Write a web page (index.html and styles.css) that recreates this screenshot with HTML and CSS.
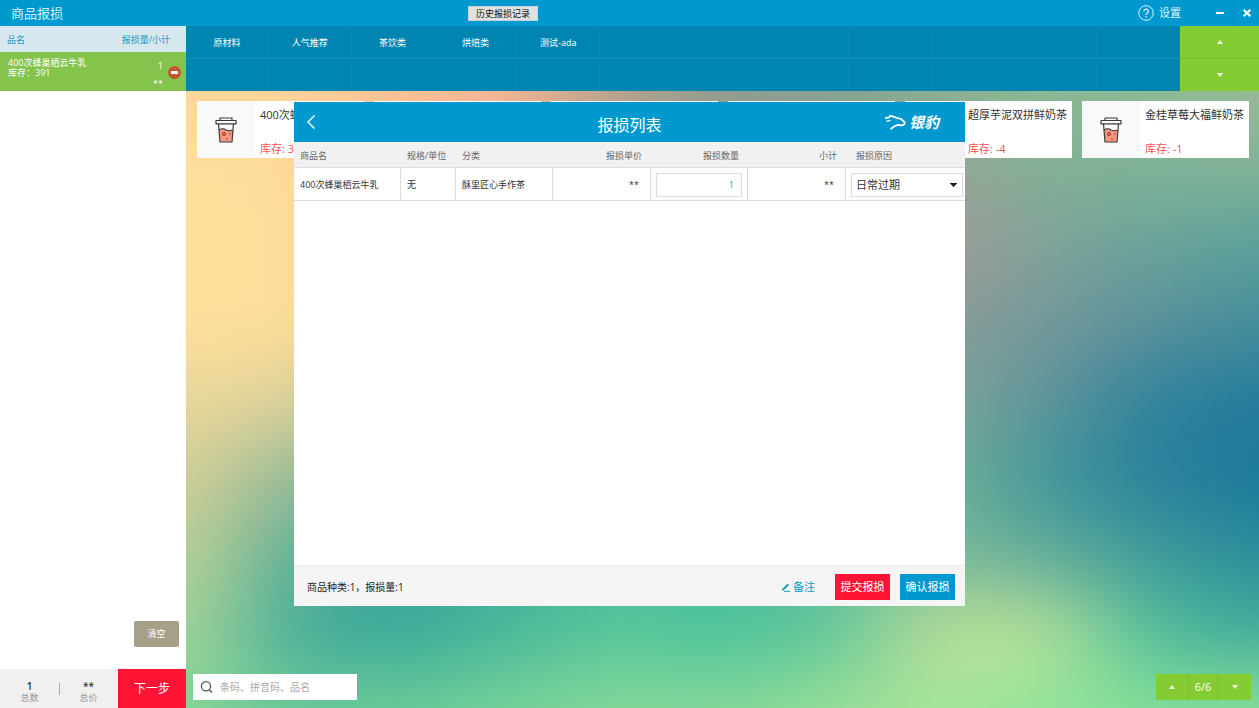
FILE: index.html
```html
<!DOCTYPE html>
<html lang="zh-CN">
<head>
<meta charset="utf-8">
<title>商品报损</title>
<link rel="stylesheet" href="styles.css">
</head>
<body>
<svg class="defs" aria-hidden="true">
  <symbol id="cup" viewBox="0 0 24 28">
    <path d="M5 14 Q9 11.500 12 14 Q15 15.500 19 14 L17.500 26 H6.500 Z" fill="#f9967c"/>
    <path d="M6 2 H18 V4.500 H6 Z M2 4.500 H22 V7.800 H2 Z M4.500 8 L6 26 H18 L19.500 8 M5 14 Q9 11.500 12 14 Q15 15.500 19 14" fill="none" stroke="#3b3b40" stroke-width="1.200" stroke-linejoin="round"/>
    <circle cx="10" cy="18" r="1.500" fill="none" stroke="#8c2f2a"/>
    <circle cx="16" cy="18" r="0.700" fill="#3b3b40"/><circle cx="13" cy="23" r="0.700" fill="#3b3b40"/>
  </symbol>
</svg>
<div class="app">
  <header class="topbar">
    <h1 class="topbar-title">商品报损</h1>
    <button class="history" type="button">历史报损记录</button>
    <div class="window-tools">
      <button class="settings" type="button">
        <svg width="16" height="16" viewBox="0 0 16 16" fill="none" stroke="currentColor"><circle cx="8" cy="8" r="7.300"/><path d="M5.800 6.300a2.200 2.200 0 1 1 3.400 1.900c-.8.500-1.200.8-1.200 1.700M8 11v1.500" stroke-width="1.300"/></svg>
        设置
      </button>
      <button class="win-btn" type="button" aria-label="最小化"><svg width="8" height="8" viewBox="0 0 8 8"><path d="M0 4H8" stroke="#fff" stroke-width="2"/></svg></button>
      <button class="win-btn close" type="button" aria-label="关闭"><svg width="8" height="8" viewBox="0 0 8 8"><path d="M.7.700 7.300 7.300M7.300.7.700 7.300" stroke="#fff" stroke-width="2"/></svg></button>
    </div>
  </header>

  <aside class="cart">
    <div class="cart-head"><span>品名</span><span>报损量/小计</span></div>
    <div class="cart-item">
      <div class="cart-name"><div>400次蜂巢栖云牛乳</div><div>库存：391</div></div>
      <div class="cart-qty"><span>1</span><span>**</span></div>
      <button class="remove" type="button" aria-label="移除"></button>
    </div>
    <div class="cart-space"><button class="clear" type="button">清空</button></div>
    <div class="cart-foot">
      <div class="total"><b>1</b><span>总数</span></div>
      <div class="total second"><b>**</b><span>总价</span></div>
      <button class="next" type="button">下一步</button>
    </div>
  </aside>

  <main class="main">
    <div class="wallpaper" aria-hidden="true">
      <div class="w1"></div><div class="w2"></div><div class="w3"></div><div class="w4"></div><div class="w5"></div><div class="w6"></div><div class="w7"></div><div class="w8"></div><div class="w9"></div>
    </div>
    <nav class="cats">
      <div class="cat-grid">
        <button type="button">原材料</button><button type="button">人气推荐</button><button type="button">茶饮类</button><button type="button">烘焙类</button><button type="button">测试-ada</button><i></i><i></i><i></i><i></i><i></i><i></i><i></i>
        <i></i><i></i><i></i><i></i><i></i><i></i><i></i><i></i><i></i><i></i><i></i><i></i>
      </div>
      <div class="cat-pager">
        <button type="button" aria-label="上一页"><span class="tri up"></span></button>
        <button type="button" aria-label="下一页"><span class="tri down"></span></button>
      </div>
    </nav>
    <section class="products">
      <article class="card"><div class="thumb"><svg><use href="#cup"/></svg></div><div class="info"><span>400次蜂巢栖云牛乳</span><em>库存: 391</em></div></article>
      <article class="card"></article>
      <article class="card"></article>
      <article class="card"></article>
      <article class="card"><div class="thumb"></div><div class="info"><span>超厚芋泥双拼鲜奶茶</span><em>库存: -4</em></div></article>
      <article class="card"><div class="thumb"><svg><use href="#cup"/></svg></div><div class="info"><span>金桂草莓大福鲜奶茶</span><em>库存: -1</em></div></article>
    </section>
    <footer class="bottom">
      <label class="search">
        <svg width="14" height="14" viewBox="0 0 14 14" fill="none" stroke="#555" stroke-width="1.300"><circle cx="6" cy="6.300" r="4.600"/><path d="M9.400 9.700 12 12.500"/></svg>
        <input type="text" placeholder="条码、拼音码、品名" aria-label="搜索商品">
      </label>
      <div class="pager">
        <button type="button" aria-label="上一页"><span class="tri up"></span></button>
        <span class="page">6/6</span>
        <button type="button" aria-label="下一页"><span class="tri down"></span></button>
      </div>
    </footer>
  </main>

  <section class="dialog" role="dialog" aria-labelledby="dlg-title">
    <header class="dlg-head">
      <button class="back" type="button" aria-label="返回"><svg width="10" height="16" viewBox="0 0 10 16"><path d="M8.500 1.500 2 8l6.500 6.500" fill="none" stroke="#fff" stroke-width="1.400"/></svg></button>
      <h2 id="dlg-title">报损列表</h2>
      <div class="brand">
        <svg width="22" height="16" viewBox="0 0 22 16" fill="none" stroke="#fff" stroke-width="1.800" stroke-linejoin="round"><path d="M0 4.200 4 3.400 5 1.800 8 2.500 11 3.600 16 5 19.500 8 19.800 9.800 17.500 11.300 12.500 11 9 12.500 5.500 15.200"/><path d="M1.500 7.400 5.500 6.300" stroke-width="1.200"/></svg>
        <span>银豹</span>
      </div>
    </header>
    <div class="dlg-body">
      <table>
        <colgroup><col class="c1"><col class="c2"><col class="c3"><col class="c4"><col class="c5"><col class="c6"><col class="c7"></colgroup>
        <thead><tr><th>商品名</th><th>规格/单位</th><th>分类</th><th class="num">报损单价</th><th class="num">报损数量</th><th class="num">小计</th><th class="reason">报损原因</th></tr></thead>
        <tbody><tr><td>400次蜂巢栖云牛乳</td><td>无</td><td>酥里匠心手作茶</td><td class="num">**</td><td class="field"><input type="text" value="1" aria-label="报损数量"></td><td class="num">**</td><td class="field pick"><select aria-label="报损原因"><option>日常过期</option></select></td></tr></tbody>
      </table>
    </div>
    <footer class="dlg-foot">
      <p>商品种类:1，报损量:1</p>
      <button class="note" type="button"><svg width="10" height="10" viewBox="0 0 10 10"><path d="M1 7.500 6.500 1.500 8 3 3 8 1 8.500Z" fill="currentColor"/><path d="M3 9.300H9" stroke="currentColor"/></svg>备注</button>
      <button class="act red" type="button">提交报损</button>
      <button class="act blue" type="button">确认报损</button>
    </footer>
  </section>
</div>
</body>
</html>
```
FILE: styles.css
```css
* { box-sizing: border-box; }
body { margin: 0; font: 12px/16px "Open Sans", "Noto Sans CJK SC", sans-serif; color: #333; }
button { border: 0; padding: 0; margin: 0; background: none; color: inherit; font: inherit; white-space: nowrap; }
h1, h2, p { margin: 0; font-weight: 400; }
.defs { position: absolute; width: 0; height: 0; }

.app { position: relative; display: grid; grid-template: 26px minmax(0, 1fr) / 186px minmax(0, 1fr); height: 100vh; overflow: hidden; }

.topbar { grid-column: 1 / -1; display: grid; grid-template-columns: 468px auto 1fr; align-items: center; background: #0099cf; color: #fff; }
.topbar-title { padding-left: 11px; font-size: 13px; color: #cfeefa; }
.history { width: 70px; height: 15px; background: #e1e1e1; border: 1px solid #c9d3d8; color: #111; font-size: 9px; line-height: 13px; }
.window-tools { display: flex; justify-content: flex-end; align-items: center; height: 26px; }
.settings { display: flex; align-items: center; gap: 5px; margin-right: 26px; font-size: 11px; color: #dff4fc; }
.win-btn { display: flex; align-items: center; justify-content: center; width: 26px; height: 26px; }
.win-btn.close { border-left: 1px solid #0089bb; }

.cart { display: flex; flex-direction: column; background: #fff; font-size: 9px; }
.cart-head { display: flex; justify-content: space-between; align-items: center; height: 26px; padding: 1px 16px 0 7px; background: #d6e8ed; color: #199bc2; }
.cart-item { display: flex; height: 39px; padding: 6px 5px 0 8px; background: #84c44c; color: #fff; line-height: 10px; }
.cart-name { flex: 1; }
.cart-qty { display: flex; flex-direction: column; align-items: flex-end; gap: 8px; margin-right: 5px; padding-top: 3px; }
.remove { width: 13px; height: 13px; margin-top: 8px; border-radius: 50%; background: linear-gradient(#fff, #fff) center / 7px 3px no-repeat #c4562c; }
.cart-space { flex: 1; display: flex; justify-content: flex-end; align-items: flex-end; padding: 0 7px 22px; }
.clear { width: 45px; height: 26px; border-radius: 2px; background: #a5a087; color: #fff; }
.cart-foot { display: flex; height: 39px; background: #f1f0ef; }
.total { position: relative; flex: 1; display: flex; flex-direction: column; align-items: center; padding-top: 11px; color: #999; line-height: 12px; }
.total b { color: #333; font-size: 10px; font-weight: 600; }
.total.second::before { content: ""; position: absolute; left: 0; top: 14px; height: 12px; border-left: 1px solid #aaa; }
.next { width: 68px; background: #ff1435; color: #fff; font-size: 12px; }

.main { position: relative; isolation: isolate; display: flex; flex-direction: column; min-width: 0; overflow: hidden; }

/* Soft colour field: nine blurred bands, larger than the area so the blur has no edge. */
.wallpaper { position: absolute; z-index: -1; inset: -51px -107px -116px; display: flex; flex-direction: column; filter: blur(36px); }
.wallpaper div { flex: 1; }
.wallpaper .w1, .wallpaper .w9 { flex: 2; }
.w1 { background: linear-gradient(90deg, #fdd69a, #fdd69a, #fed29a, #fdc096, #f3b596, #b5a28c, #8f9c90, #85a292, #88b092, #8bb993, #8bbb94, #9abb96, #9abb96); }
.w2 { background: linear-gradient(90deg, #fee09a, #fee09a, #fedc9a, #fdc096, #f3b596, #b5a28c, #8f9c90, #909c92, #98a597, #82b096, #7fb298, #82b298, #82b298); }
.w3 { background: linear-gradient(90deg, #ffe09a, #ffe09a, #ffdd9a, #e8c898, #c8b898, #a8a896, #989c96, #a09a96, #a79896, #80a49a, #68a39a, #5aa19a, #5aa19a); }
.w4 { background: linear-gradient(90deg, #ffdf9a, #ffdf9a, #ffde9a, #d8ce98, #b0b898, #98a898, #909e98, #909c98, #8a9c98, #75989a, #5c909b, #458c9b, #458c9b); }
.w5 { background: linear-gradient(90deg, #e8d89a, #e8d89a, #e0d29a, #a8c098, #88b098, #80a898, #80a898, #80a898, #7fa598, #5f949a, #2f839c, #237b9b, #237b9b); }
.w6 { background: linear-gradient(90deg, #d4ce96, #d4ce96, #98ba98, #60a898, #58a898, #60ac98, #68b098, #70b098, #75b097, #40979a, #2a809c, #1a789b, #1a789b); }
.w7 { background: linear-gradient(90deg, #bcd095, #bcd095, #60af98, #40a89a, #44b09a, #4cbb9b, #50be9b, #60ba9a, #7ab898, #62ab9a, #3e9a9a, #2b8c9b, #2b8c9b); }
.w8 { background: linear-gradient(90deg, #a4d596, #a4d596, #46ac9a, #36a79a, #48b79b, #58c69b, #48c39c, #60c59b, #bcde98, #b8e298, #50bd9b, #42ab9b, #42ab9b); }
.w9 { background: linear-gradient(90deg, #85d496, #85d496, #6cc998, #6ccc98, #78d398, #86d998, #86d798, #98df98, #a5e49a, #92e49a, #82df99, #8ae09a, #8ae09a); }

.cats { display: flex; height: 65px; color: #fff; font-size: 9px; }
.cat-grid { flex: 1; display: grid; grid-template: 33px 1fr / repeat(12, 1fr); background: #0085b2; }
.cat-grid > * { border-right: 1px solid #0a89b5; border-bottom: 1px solid #1990b7; }
.cat-grid > button { padding-top: 2px; }
.cat-grid > :nth-child(n+13) { border-bottom: 0; }
.cat-pager { display: grid; grid-template-rows: 32px 1fr; width: 79px; background: #85cc33; }
.cat-pager button { display: flex; align-items: center; justify-content: center; }
.cat-pager button + button { border-top: 1px solid #78bd31; }
.tri { border: 3px solid transparent; }
.tri.up { border-top: 0; border-bottom: 4px solid #f4fbe8; }
.tri.down { border-bottom: 0; border-top: 4px solid #f4fbe8; }
.products { flex: 1; display: grid; grid-template-columns: repeat(6, 1fr); align-content: start; gap: 10px; padding: 10px 10px 0 11px; }
.card { display: flex; height: 57px; background: #fff; min-width: 0; overflow: hidden; }
.thumb { display: flex; flex: none; align-items: center; justify-content: center; width: 58px; background: #f9f9fa; }
.thumb svg { width: 24px; height: 28px; }
.info { display: flex; flex-direction: column; justify-content: space-between; padding: 6px 0 1px 5px; font-size: 11px; white-space: nowrap; }
.info em { color: #f35454; font-style: normal; }
.bottom { display: flex; justify-content: space-between; padding: 0 8px 8px 7px; }
.search { display: flex; align-items: center; gap: 6px; width: 164px; height: 26px; padding: 0 7px; background: #fff; }
.search input { flex: 1; min-width: 0; padding: 0; border: 0; outline: 0; background: none; font: inherit; font-size: 10px; }
.search input::placeholder { color: #aaa; }
.pager { display: grid; grid-template-columns: 32px 30px 33px; height: 26px; background: #85cc33; color: #fff; font-size: 11px; }
.pager > * { display: flex; align-items: center; justify-content: center; }
.page { border: solid #78bd31; border-width: 0 1px; }

.dialog { position: absolute; inset: 0; margin: auto; width: 671px; height: 504px; display: flex; flex-direction: column; background: #fff; font-size: 9px; }
.dlg-head { display: grid; grid-template-columns: 1fr auto 1fr; align-items: center; height: 40px; padding: 0 12px; background: #0099cf; color: #fff; }
.dlg-head h2 { padding-top: 5px; font-size: 16px; line-height: 24px; }
.back { justify-self: start; height: 16px; }
.brand { display: flex; align-items: center; justify-self: end; gap: 2px; margin-right: 14px; font-size: 15px; font-weight: 700; font-style: italic; }
.dlg-body { flex: 1; }
table { width: 100%; table-layout: fixed; border-collapse: separate; border-spacing: 0; }
.c1 { width: 107px; } .c2 { width: 55px; } .c3 { width: 97px; } .c4 { width: 98px; } .c5 { width: 97px; } .c6 { width: 98px; }
th, td { padding: 0 6px; text-align: left; font-weight: 400; white-space: nowrap; }
th { height: 26px; padding-top: 2px; background: #f1f1f1; color: #666; border-bottom: 1px solid #ddd; }
td { height: 33px; padding-top: 1px; border: solid #ddd; border-width: 0 1px 1px 0; }
td:last-child { border-right: 0; }
th.num { padding-right: 9px; }
.num { text-align: right; padding-right: 11px; }
th.reason { padding-left: 10px; }
td.field { padding: 1px 5px 0; }
td.pick { padding-right: 2px; }
td input, td select { display: block; width: 100%; height: 24px; border: 1px solid #ddd; border-radius: 0; background: #fff; font: inherit; }
td input { padding: 0 7px; text-align: right; color: #199bc2; }
td select { appearance: none; padding: 0 4px; color: #333; font-size: 11px; background: conic-gradient(from 315deg at 50% 100%, #222 90deg, transparent 0) right 5px center / 8px 4px no-repeat; background: conic-gradient(from -45deg at 50% 100%, #222 90deg, transparent 0) right 5px center / 8px 4px no-repeat; }
.dlg-foot { display: flex; align-items: center; height: 41px; padding: 1px 10px 0 13px; background: #f5f5f5; border-top: 1px solid #eee; color: #222; font-size: 10px; }
.dlg-foot p { flex: 1; }
.note { display: flex; align-items: center; gap: 2px; margin-right: 20px; color: #0f98c6; font-size: 11px; }
.act { width: 55px; height: 26px; color: #fff; font-size: 11px; }
.act.red { background: #ff1435; margin-right: 10px; }
.act.blue { background: #0099cf; }
```
